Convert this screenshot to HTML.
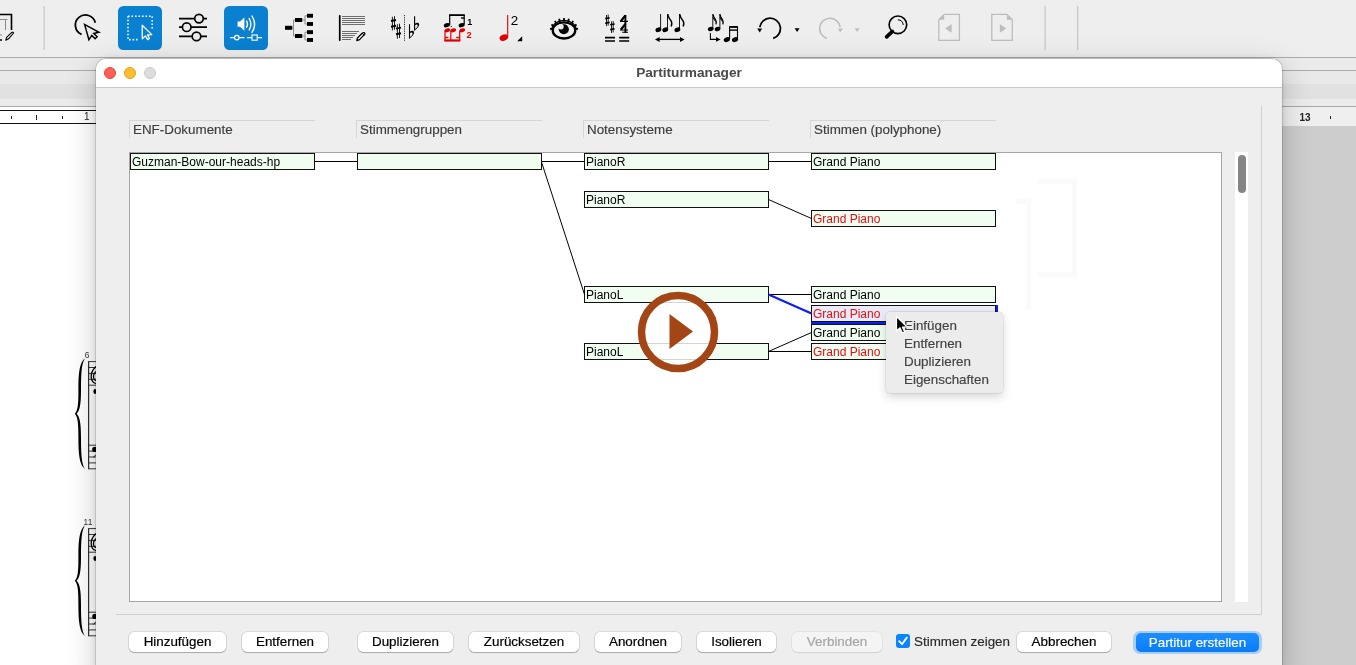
<!DOCTYPE html>
<html><head><meta charset="utf-8">
<style>
*{box-sizing:border-box;margin:0;padding:0}
html,body{-webkit-font-smoothing:antialiased;width:1356px;height:665px;overflow:hidden;background:#ececec;font-family:"Liberation Sans",sans-serif;position:relative}
.a{position:absolute}
#tb{left:0;top:0;width:1356px;height:58px;background:#eeeeee;border-bottom:1px solid #ababab}
#band{left:0;top:58px;width:1356px;height:49px;background:#ebebeb}
#score{left:0;top:124px;width:96px;height:541px;background:#fff}
#grayR{left:1282px;top:126px;width:74px;height:539px;background:#cdcdcd}
#dlg{left:96px;top:59px;width:1186px;height:620px;background:#eeeeee;border-radius:10px 10px 0 0;overflow:hidden;box-shadow:0 0 0 0.5px rgba(0,0,0,0.25),0 0 7px rgba(0,0,0,0.1),0 8px 30px rgba(0,0,0,0.22)}
#title{left:0;top:0;width:1186px;height:29px;background:#fff;border-bottom:1px solid #c8c8c8}
.dot{width:12px;height:12px;border-radius:50%;top:8px}
.hdr{top:61px;height:18px;border-top:1px solid #d6d6d6;border-left:1px solid #d6d6d6;font-size:13.4px;color:#3d3d3d;-webkit-text-stroke:0.15px #3d3d3d;padding-left:3px;line-height:18px}
#panel{left:33px;top:93px;width:1093px;height:450px;background:#fff;border:1px solid #a6a6a6}
.bx{position:absolute;height:17px;width:185px;border:1px solid #111;background:#f1fdf1;font-size:12px;line-height:15px;padding:1px 0 0 1px;color:#000;white-space:nowrap;overflow:hidden}
.red{color:#e01010}
.btn.dis{background:#f4f4f4;color:#a6a6a6;-webkit-text-stroke:0.2px #a6a6a6;box-shadow:0 0 0 0.5px rgba(0,0,0,0.08),0 1px 1px rgba(0,0,0,0.08)}
.sel{background:#eaeaf8}
.btn{position:absolute;top:632px;height:20px;background:#fff;border-radius:5px;box-shadow:0 0 0 0.5px rgba(0,0,0,0.18),0 1px 1px rgba(0,0,0,0.22);font-size:13.4px;line-height:20px;text-align:center;color:#000;-webkit-text-stroke:0.2px #000}
#root{position:absolute;left:0;top:0;width:1356px;height:665px;overflow:hidden;will-change:transform}
</style></head><body><div id="root">
<div id="tb" class="a"></div>
<!--TB--><svg class="a" style="left:0;top:0" width="1356" height="57" viewBox="0 0 1356 57">
<!-- partial icon -->
<path d="M0 14.5 H11.5 V30" stroke="#000" stroke-width="1.6" fill="none"/>
<path d="M0 19.5 H7.5 M5.5 19 V30 M0 35 H2" stroke="#8a8a8a" stroke-width="1" fill="none"/>
<path d="M0 40 H2" stroke="#000" stroke-width="1.6"/>
<path d="M5.8 40.2 L6.6 37.4 L11.8 32.4 Q13.2 31.6 13.6 33 L8.6 38.8 Z" stroke="#000" stroke-width="1.1" fill="none" stroke-linejoin="round"/>
<!-- separators -->
<rect x="43.5" y="6" width="1.2" height="44" fill="#c6c6c6"/>
<rect x="1044.5" y="6" width="1.2" height="44" fill="#c6c6c6"/>
<rect x="1077" y="6" width="1.2" height="44" fill="#c6c6c6"/>
<!-- lasso -->
<path d="M81.6 34.4 A10.1 10.1 0 1 1 95.3 22.8" stroke="#000" stroke-width="1.8" fill="none"/>
<path d="M84.6 24.4 L88.9 39.8 L91.8 35.4 L95.1 38.8 L97.1 36.8 L93.8 33.5 L98.9 32.3 Z" stroke="#000" stroke-width="1.5" fill="#ececec" stroke-linejoin="miter"/>
<!-- blue selection btn -->
<rect x="118" y="6" width="44" height="44" rx="5.5" fill="#0a80d0"/>
<path d="M128 16.2 H152.2 V28.5 M128 16.2 V39.6 H137.5" stroke="#fff" stroke-width="1.6" stroke-dasharray="1.6 1.9" fill="none"/>
<path d="M142.2 25.3 L142.3 38.9 L145.4 35.9 L147.6 39.6 L149.5 38.5 L147.5 35 L151.8 34.6 Z" stroke="#fff" stroke-width="1.3" fill="#0a80d0" stroke-linejoin="round"/>
<!-- sliders -->
<path d="M179 18.6 H207 M179 27.2 H207 M179 36.4 H207" stroke="#000" stroke-width="1.7"/>
<circle cx="199" cy="18.6" r="4.3" stroke="#000" stroke-width="1.7" fill="#ececec"/>
<circle cx="186.7" cy="27.2" r="4.3" stroke="#000" stroke-width="1.7" fill="#ececec"/>
<circle cx="196.5" cy="36.4" r="4.3" stroke="#000" stroke-width="1.7" fill="#ececec"/>
<!-- blue sound btn -->
<rect x="224" y="6" width="44" height="44" rx="5.5" fill="#0a80d0"/>
<path d="M237.6 21.6 H240 L244.4 17.6 V30.8 L240 26.8 H237.6 Z" fill="#fff"/>
<path d="M246.6 21.2 Q248.4 24.2 246.6 27.2 M249.2 18.6 Q252.6 24.2 249.2 29.8 M252 16 Q257.2 24.2 252 32.4" stroke="#fff" stroke-width="1.4" fill="none" stroke-linecap="round"/>
<path d="M230 37.6 H234.5 M239.2 37.6 H244.5 M247 37.6 H252 M257.3 37.6 H262" stroke="#fff" stroke-width="1.2"/>
<circle cx="236.8" cy="37.6" r="2.3" stroke="#fff" stroke-width="1.2" fill="none"/>
<rect x="252" y="35" width="5.2" height="5.2" stroke="#fff" stroke-width="1.1" fill="none"/>
<!-- tree -->
<path d="M292 27.8 H293.5 M293.5 20 V36 H295 M293.5 20 H295 M302 20 H305 M302 36 H305 M305 15.8 V24 M305 32.2 V40 M305 15.8 H307 M305 24 H307 M305 32.2 H307 M305 40 H307" stroke="#8c8c8c" stroke-width="1" fill="none"/>
<g fill="#000">
<rect x="285" y="25.8" width="7.2" height="4"/>
<rect x="295" y="18" width="7.2" height="4"/>
<rect x="295" y="34" width="7.2" height="4"/>
<rect x="307" y="13.8" width="6" height="3.9"/>
<rect x="307" y="22" width="6" height="3.9"/>
<rect x="307" y="30.2" width="6" height="3.9"/>
<rect x="307" y="38" width="6" height="3.9"/>
</g>
<!-- staff pencil -->
<rect x="338.9" y="15" width="1.7" height="26" rx="0.8" fill="#000"/>
<g fill="#6e6e6e">
<rect x="342" y="16" width="23" height="1"/><rect x="342" y="18" width="23" height="1"/><rect x="342" y="20" width="23" height="1"/><rect x="342" y="22" width="23" height="1"/><rect x="342" y="24" width="23" height="1"/>
<rect x="342" y="31" width="17" height="1"/><rect x="342" y="33" width="15" height="1"/><rect x="342" y="35" width="13" height="1"/><rect x="342" y="37" width="11" height="1"/><rect x="342" y="39" width="9" height="1"/>
</g>
<path d="M356.8 40.6 L357.4 38 L362.4 33 Q364.4 31.8 365 33.8 L359.6 39.6 Z" stroke="#000" stroke-width="1.2" fill="none" stroke-linejoin="round"/>
<path d="M362.2 33.4 L364.4 35.4" stroke="#000" stroke-width="1"/>
<!-- sharps flats -->
<g stroke="#000" fill="none">
<path d="M392.4 16.8 V30.5 M394.5 16.2 V29.6" stroke-width="0.9"/>
<path d="M391 21 L396 20 M391 26.7 L396 25.7" stroke-width="1.9"/>
<path d="M397.4 24.2 V38.7 M399.5 23.6 V38" stroke-width="0.9"/>
<path d="M396 28.6 L401 27.6 M396 34.3 L401 33.3" stroke-width="1.9"/>
<path d="M404.5 15 V41" stroke="#333" stroke-width="1" stroke-dasharray="1 0.8"/>
<path d="M409.5 24.2 V38.6" stroke-width="1.1"/><path d="M409.3 38.6 C412.3 36.6 414.3 34.1 414.1 32.300000000000004 C413.90000000000003 30.200000000000003 411.7 30.200000000000003 409.3 32.0 L409.3 33.4 C411.3 32.2 412.7 32.4 412.6 33.4 C412.40000000000003 35.0 410.90000000000003 36.6 409.3 37.2 Z" fill="#000" stroke="none"/>
<path d="M414.6 16.2 V30.6" stroke-width="1.1"/><path d="M414.4 30.6 C417.4 28.6 419.4 26.1 419.2 24.3 C419.0 22.200000000000003 416.79999999999995 22.200000000000003 414.4 24.0 L414.4 25.400000000000002 C416.4 24.200000000000003 417.79999999999995 24.400000000000002 417.7 25.400000000000002 C417.5 27.0 416.0 28.6 414.4 29.200000000000003 Z" fill="#000" stroke="none"/>
</g>
<!-- notes red/black -->
<g>
<rect x="449" y="14.2" width="15.8" height="1.8" fill="#000"/>
<path d="M449.7 15 V25 M464.2 15 V24.6" stroke="#000" stroke-width="1.2"/>
<rect x="461" y="17.3" width="3.4" height="1.4" fill="#000"/>
<ellipse cx="446.8" cy="25.2" rx="3.1" ry="2" transform="rotate(-20 446.8 25.2)" fill="#000"/>
<ellipse cx="461.6" cy="25.2" rx="3.1" ry="2" transform="rotate(-20 461.6 25.2)" fill="#000"/>
<circle cx="451.3" cy="26.4" r="0.6" fill="#000"/>
<text x="467.2" y="24.7" font-family="Liberation Sans" font-weight="bold" font-size="9" fill="#000">1</text>
<ellipse cx="447.4" cy="30.3" rx="2.9" ry="1.9" transform="rotate(-20 447.4 30.3)" fill="#e00000"/>
<ellipse cx="453.3" cy="30.3" rx="2.9" ry="1.9" transform="rotate(-20 453.3 30.3)" fill="#e00000"/>
<ellipse cx="462.3" cy="30.3" rx="2.9" ry="1.9" transform="rotate(-20 462.3 30.3)" fill="#e00000"/>
<path d="M445 30.6 V41 M450.8 30.6 V41 M459.7 30.6 V41" stroke="#e00000" stroke-width="1.2"/>
<rect x="444.4" y="39.4" width="15.9" height="2.2" fill="#e00000"/>
<rect x="445" y="36.8" width="3.4" height="1.4" fill="#e00000"/>
<rect x="456.3" y="36.8" width="3.4" height="1.4" fill="#e00000"/>
<text x="466.6" y="37.9" font-family="Liberation Sans" font-weight="bold" font-size="9.2" fill="#e00000">2</text>
</g>
<!-- red quarter -->
<path d="M507.7 15 V37.5" stroke="#e00000" stroke-width="1.1"/>
<ellipse cx="503.8" cy="37.6" rx="4.4" ry="3" transform="rotate(-22 503.8 37.6)" fill="#e00000"/>
<text x="510.8" y="25" font-family="Liberation Sans" font-size="13.4" fill="#000">2</text>
<path d="M517.2 41.2 L522.2 41.2 L522.2 36.2 Z" fill="#000"/>
<!-- eye hover bg -->
<rect x="539.4" y="3.6" width="54.6" height="49" fill="#eeeeee"/>
<ellipse cx="564" cy="30.4" rx="11.25" ry="8.1" stroke="#000" stroke-width="2.3" fill="#eeeeee"/>
<path d="M551.8 29.799999999999997 A12.2 9.4 0 0 1 576.2 29.799999999999997" stroke="#000" stroke-width="1.2" fill="none"/>
<path d="M552.31 29.16 L549.94 28.67 M553.58 26.22 L551.46 24.58 M556.42 23.58 L554.87 20.90 M559.96 22.04 L559.14 18.75 M564.00 21.50 L564.00 18.00 M568.04 22.04 L568.86 18.75 M571.58 23.58 L573.13 20.90 M574.42 26.22 L576.54 24.58 M575.69 29.16 L578.06 28.67 " stroke="#000" stroke-width="1.8"/>
<circle cx="563.8" cy="29.3" r="5.05" fill="#000"/>
<circle cx="560.9" cy="26.7" r="2.75" fill="#eeeeee"/>
<!-- key time sig -->
<g stroke="#000" fill="none">
<path d="M606.5 15 V26.2 M608.2 14.6 V25.6" stroke-width="0.85"/>
<path d="M605.2 18.6 L609.6 17.8 M605.2 23.2 L609.6 22.4" stroke-width="1.6"/>
<path d="M611.5 21.4 V33 M613.2 21 V32.4" stroke-width="0.85"/>
<path d="M610.2 24.8 L614.6 24 M610.2 29.6 L614.6 28.8" stroke-width="1.6"/>
<path d="M605 37.6 H615 M605 41 H615 M619.2 37.6 H629.2 M619.2 41 H629.2" stroke-width="1.6"/>
<path d="M620.8 21.2 L625.4 15.4 M620.8 29.8 L625.4 24" stroke-width="2.2"/>
<path d="M625.4 15 V32.8" stroke-width="1.9"/>
<path d="M620 21.4 H628 M620 30 H628 M622.2 32.2 H628" stroke-width="1.1"/>
</g>
<!-- notes arrow -->
<g fill="#000">
<ellipse cx="658.4" cy="29.8" rx="3" ry="2.2" transform="rotate(-22 658.4 29.8)"/>
<ellipse cx="665.3" cy="29.8" rx="3" ry="2.2" transform="rotate(-22 665.3 29.8)"/>
<ellipse cx="677.4" cy="29.8" rx="3" ry="2.2" transform="rotate(-22 677.4 29.8)"/>
<path d="M655 39.4 L659.6 36.9 V41.9 Z M684.6 39.4 L680 36.9 V41.9 Z"/>
</g>
<g stroke="#000" fill="none">
<path d="M660.6 14 V29.4 M667.5 14 V29.4 M679.5 14 V29.4" stroke-width="0.9"/>
<path d="M667.7 14.2 Q668.4 18 670.8 20.4 Q672.6 22.8 671.2 26.6 M679.7 14.2 Q680.4 18 682.8 20.4 Q684.6 22.8 683.2 26.6" stroke-width="1.4"/>
<path d="M658 39.4 H681.6" stroke-width="1.3"/>
</g>
<!-- notes moving -->
<g fill="#000">
<ellipse cx="710.7" cy="29" rx="2.9" ry="2.1" transform="rotate(-22 710.7 29)"/>
<ellipse cx="717.5" cy="29" rx="2.9" ry="2.1" transform="rotate(-22 717.5 29)"/>
<ellipse cx="726.8" cy="39.6" rx="3.2" ry="2.3" transform="rotate(-22 726.8 39.6)"/>
<ellipse cx="735" cy="39.6" rx="3.2" ry="2.3" transform="rotate(-22 735 39.6)"/>
<path d="M720.6 39.4 L716 37 V41.8 Z"/>
<rect x="729.2" y="26" width="8.8" height="1.9"/>
<rect x="729.2" y="29.4" width="8.8" height="1.4"/>
</g>
<g stroke="#000" fill="none">
<path d="M712.8 14 V28.6 M719.9 14 V28.6" stroke-width="0.9"/>
<path d="M713 14.4 Q713.8 18 715.6 19.8 Q716.6 21.6 716 24.4 M719.9 14.4 Q720.7 18 722.5 19.8 Q723.5 21.6 722.9 24.4" stroke-width="1.3"/>
<path d="M713 17.6 L715.6 21.6 M719.9 17.6 L722.5 21.6" stroke-width="1"/>
<path d="M710.4 33 V39.4 H716.6" stroke-width="1.1"/>
<path d="M729.6 39 V26.4 M737.5 39 V26.4" stroke-width="1.1"/>
</g>
<!-- undo -->
<path d="M759.8 27.2 A10.35 10.35 0 1 1 773.2 38.4" stroke="#000" stroke-width="1.75" fill="none"/>
<path d="M757.2 28.4 H762.2 L759.7 32.4 Z" fill="#000"/>
<path d="M794.6 28.2 H799.6 L797.1 32 Z" fill="#000"/>
<!-- redo gray -->
<path d="M826.8 38.4 A10.35 10.35 0 1 1 840.2 27.2" stroke="#bdbdbd" stroke-width="1.6" fill="none"/>
<path d="M837.8 28.4 H842.8 L840.3 32.4 Z" fill="#bdbdbd"/>
<path d="M854.6 28.2 H859.6 L857.1 32 Z" fill="#bdbdbd"/>
<!-- magnifier -->
<circle cx="897.9" cy="24.8" r="8.8" stroke="#000" stroke-width="1.65" fill="none"/>
<path d="M897.8 19.8 A5.6 5.6 0 0 1 903.2 25" stroke="#000" stroke-width="1" fill="none"/>
<path d="M892.4 31.4 L886.6 36.8" stroke="#000" stroke-width="3.7" stroke-linecap="round"/>
<!-- prev/next page -->
<path d="M938.8 40.3 V19.8 L944.2 14.4 H959.4 V40.3 Z" stroke="#bdbdbd" stroke-width="1.3" fill="none"/>
<path d="M938.8 19.8 L944.2 14.4 V19.8 Z" fill="#bdbdbd"/>
<path d="M945.2 28.4 L951.6 24 V32.8 Z" fill="#bdbdbd"/>
<path d="M991.8 40.3 V14.4 H1006.9 L1012.3 19.8 V40.3 Z" stroke="#bdbdbd" stroke-width="1.3" fill="none"/>
<path d="M1006.9 14.4 L1012.3 19.8 H1006.9 Z" fill="#bdbdbd"/>
<path d="M1006.2 28.4 L999.8 24 V32.8 Z" fill="#bdbdbd"/>
</svg>
<!--/TB-->
<div id="band" class="a"></div>
<div class="a" style="left:0;top:70px;width:1356px;height:1px;background:#ababab"></div>
<div class="a" style="left:0;top:71px;width:1356px;height:13px;background:#e9e9e9"></div>
<div class="a" style="left:0;top:84px;width:1356px;height:15px;background:#e1e1e1"></div>
<div class="a" style="left:0;top:99px;width:1356px;height:7px;background:#ebebeb"></div>
<div class="a" style="left:0;top:106px;width:1356px;height:1px;background:#a9a9a9"></div>
<div class="a" style="left:0;top:107px;width:1356px;height:19px;background:#efefef"></div>
<div class="a" style="left:0;top:107px;width:96px;height:17px;background:#fff"></div>
<div class="a" style="left:0;top:110px;width:96px;height:1px;background:#111"></div>
<div class="a" style="left:0;top:123px;width:96px;height:1px;background:#111"></div>
<div class="a" style="left:11px;top:116px;width:1px;height:3px;background:#222"></div>
<div class="a" style="left:36px;top:115px;width:1px;height:5px;background:#222"></div>
<div class="a" style="left:62px;top:116px;width:1px;height:3px;background:#222"></div>
<div class="a" style="left:84px;top:111px;font-size:10px;color:#222;line-height:12px">1</div>
<div class="a" style="left:1299.5px;top:112px;font-size:10px;font-weight:bold;color:#222;line-height:12px">13</div>
<div class="a" style="left:1330px;top:116px;width:1px;height:3px;background:#222"></div>
<div id="score" class="a"></div>
<div id="grayR" class="a"></div>
<svg class="a" style="left:0;top:0" width="96" height="665"><g transform="translate(0 0)"><path d="M85 358.3 C79.6 362.5 78.4 372 78.4 390 C78.5 405 77.6 411 74.8 413.7 C77.6 416.4 78.5 422.4 78.4 437.4 C78.4 455.4 79.6 464.9 85 469.1 C81.8 464.4 81 455.4 81 437.4 C81 422.4 79.6 416.4 76.6 413.7 C79.6 411 81 405 81 390 C81 372 81.8 363 85 358.3 Z" fill="#000"/><path d="M88.7 361.2 V469.2" stroke="#000" stroke-width="1"/><path d="M88.5 361.6 H96" stroke="#222" stroke-width="0.9"/><path d="M88.5 367.5 H96" stroke="#222" stroke-width="0.9"/><path d="M88.5 373.4 H96" stroke="#222" stroke-width="0.9"/><path d="M88.5 379.3 H96" stroke="#222" stroke-width="0.9"/><path d="M88.5 385.2 H96" stroke="#222" stroke-width="0.9"/><path d="M88.5 445.2 H96" stroke="#222" stroke-width="0.9"/><path d="M88.5 451.1 H96" stroke="#222" stroke-width="0.9"/><path d="M88.5 457 H96" stroke="#222" stroke-width="0.9"/><path d="M88.5 462.9 H96" stroke="#222" stroke-width="0.9"/><path d="M88.5 468.8 H96" stroke="#222" stroke-width="0.9"/><path d="M96 366.5 Q91 371 91.2 377 Q91.6 382.6 96 383.6 M96 371.5 Q93.2 374 93.5 377.5 Q93.8 380 96 380.6" stroke="#000" stroke-width="1.3" fill="none"/><ellipse cx="95" cy="391.5" rx="1.6" ry="2.4" fill="#000"/><circle cx="94.8" cy="449.4" r="2.6" fill="#000"/><path d="M93.5 457.5 L96 454.5" stroke="#000" stroke-width="0.9"/><text x="84.8" y="357.8" font-family="Liberation Sans" font-size="8.4" fill="#333">6</text></g><g transform="translate(0 167)"><path d="M85 358.3 C79.6 362.5 78.4 372 78.4 390 C78.5 405 77.6 411 74.8 413.7 C77.6 416.4 78.5 422.4 78.4 437.4 C78.4 455.4 79.6 464.9 85 469.1 C81.8 464.4 81 455.4 81 437.4 C81 422.4 79.6 416.4 76.6 413.7 C79.6 411 81 405 81 390 C81 372 81.8 363 85 358.3 Z" fill="#000"/><path d="M88.7 361.2 V469.2" stroke="#000" stroke-width="1"/><path d="M88.5 361.6 H96" stroke="#222" stroke-width="0.9"/><path d="M88.5 367.5 H96" stroke="#222" stroke-width="0.9"/><path d="M88.5 373.4 H96" stroke="#222" stroke-width="0.9"/><path d="M88.5 379.3 H96" stroke="#222" stroke-width="0.9"/><path d="M88.5 385.2 H96" stroke="#222" stroke-width="0.9"/><path d="M88.5 445.2 H96" stroke="#222" stroke-width="0.9"/><path d="M88.5 451.1 H96" stroke="#222" stroke-width="0.9"/><path d="M88.5 457 H96" stroke="#222" stroke-width="0.9"/><path d="M88.5 462.9 H96" stroke="#222" stroke-width="0.9"/><path d="M88.5 468.8 H96" stroke="#222" stroke-width="0.9"/><path d="M96 366.5 Q91 371 91.2 377 Q91.6 382.6 96 383.6 M96 371.5 Q93.2 374 93.5 377.5 Q93.8 380 96 380.6" stroke="#000" stroke-width="1.3" fill="none"/><ellipse cx="95" cy="391.5" rx="1.6" ry="2.4" fill="#000"/><circle cx="94.8" cy="449.4" r="2.6" fill="#000"/><path d="M93.5 457.5 L96 454.5" stroke="#000" stroke-width="0.9"/><text x="83.6" y="357.8" font-family="Liberation Sans" font-size="8.4" fill="#333">11</text></g></svg>

<div id="dlg" class="a">
  <div id="title" class="a">
    <div class="a dot" style="left:8px;background:#fe5f57;border:0.5px solid #e14640"></div>
    <div class="a dot" style="left:28px;background:#febc2e;border:0.5px solid #dfa023"></div>
    <div class="a dot" style="left:48px;background:#dddddd;border:0.5px solid #c9c9c9"></div>
    <div class="a" style="left:0;width:1186px;top:6px;text-align:center;font-weight:bold;font-size:13.7px;color:#4a4a4a;line-height:16px">Partiturmanager</div>
  </div>
  <div class="a hdr" style="left:33px;width:186px">ENF-Dokumente</div>
  <div class="a hdr" style="left:260px;width:186px">Stimmengruppen</div>
  <div class="a hdr" style="left:487px;width:186px">Notensysteme</div>
  <div class="a hdr" style="left:714px;width:186px">Stimmen (polyphone)</div>
  <div id="panel" class="a"></div>
</div>
<div class="bx " style="left:130px;top:153px">Guzman-Bow-our-heads-hp</div>
<div class="bx " style="left:357px;top:153px"></div>
<div class="bx " style="left:584px;top:153px">PianoR</div>
<div class="bx " style="left:584px;top:191px">PianoR</div>
<div class="bx " style="left:584px;top:286px">PianoL</div>
<div class="bx " style="left:584px;top:343px">PianoL</div>
<div class="bx " style="left:811px;top:153px">Grand Piano</div>
<div class="bx red" style="left:811px;top:210px">Grand Piano</div>
<div class="bx " style="left:811px;top:286px">Grand Piano</div>
<div class="bx red sel" style="left:811px;top:305px">Grand Piano</div>
<div class="bx " style="left:811px;top:324px">Grand Piano</div>
<div class="bx red" style="left:811px;top:343px">Grand Piano</div>
<svg class="a" style="left:0;top:0" width="1356" height="665">
<g stroke="#000" stroke-width="1" fill="none" shape-rendering="auto">
<line x1="315" y1="161.5" x2="357" y2="161.5"/>
<line x1="542" y1="161.5" x2="584" y2="161.5"/>
<line x1="541.5" y1="162" x2="584.5" y2="294.5"/>
<line x1="769" y1="161.5" x2="811" y2="161.5"/>
<line x1="768.5" y1="199.5" x2="811.5" y2="218.5"/>
<line x1="769" y1="294.5" x2="811" y2="294.5"/>
<line x1="768.5" y1="351.5" x2="811.5" y2="332.5"/>
<line x1="769" y1="351.5" x2="811" y2="351.5"/>
</g>
<line x1="768.5" y1="294.5" x2="811.5" y2="313.5" stroke="#0a1ff0" stroke-width="2.2"/>
<rect x="811" y="322" width="187" height="2" fill="#0a1ff0"/>
<rect x="996" y="305" width="2" height="19" fill="#0a1ff0"/>
</svg>
<div class="btn" style="left:129px;width:97px">Hinzufügen</div>
<div class="btn" style="left:242px;width:86px">Entfernen</div>
<div class="btn" style="left:358px;width:95px">Duplizieren</div>
<div class="btn" style="left:469px;width:110px">Zurücksetzen</div>
<div class="btn" style="left:595px;width:86px">Anordnen</div>
<div class="btn" style="left:697px;width:79px">Isolieren</div>
<div class="btn" style="left:1017px;width:94px">Abbrechen</div>
<div class="btn dis" style="left:792px;width:90px">Verbinden</div>
<div class="a" style="left:896px;top:634px;width:14px;height:14px;border-radius:3px;background:#0a84ff"><svg width="14" height="14" style="position:absolute;left:0;top:0"><path d="M3.2 7.2 L6 10.2 L10.8 3.6" stroke="#fff" stroke-width="1.8" fill="none" stroke-linecap="round" stroke-linejoin="round"/></svg></div>
<div class="a" style="left:914px;top:632px;font-size:13.4px;line-height:20px;color:#2a2a2a;-webkit-text-stroke:0.15px #2a2a2a">Stimmen zeigen</div>
<div class="a" style="left:1133px;top:631px;width:129px;height:23px;border-radius:7px;background:#a9cdf7"></div>
<div class="a" style="left:1136px;top:633px;width:123px;height:19px;border-radius:5px;background:linear-gradient(#1c8fff,#0a7cf5);color:#fff;font-size:13.4px;line-height:19px;text-align:center;-webkit-text-stroke:0.15px #fff">Partitur erstellen</div>
<div class="a" style="left:116px;top:614px;width:1146px;height:1px;background:#cfcfcf"></div>
<div class="a" style="left:1261px;top:106px;width:1px;height:509px;background:#cfcfcf"></div>
<div class="a" style="left:1235px;top:152px;width:13px;height:450px;background:#fff"></div>
<div class="a" style="left:1238px;top:155px;width:8px;height:38px;border-radius:4px;background:#858585"></div>
<svg class="a" style="left:1000px;top:170px" width="90" height="140"><path d="M37.5 11.5 H74.5 V104.5 H37.5 M16 31.5 H29 V140" stroke="#fafafa" stroke-width="4.5" fill="none"/></svg>
<div class="a" style="left:886px;top:312px;width:117px;height:81px;background:#ececec;border-radius:4px;box-shadow:0 0 0 0.5px rgba(0,0,0,0.12),0 4px 10px rgba(0,0,0,0.16)"></div>
<div class="a" style="left:904px;top:317px;font-size:13.4px;line-height:18px;color:#424242;-webkit-text-stroke:0.15px #424242">Einfügen<br>Entfernen<br>Duplizieren<br>Eigenschaften</div>
<svg class="a" style="left:892px;top:314px" width="20" height="24" viewBox="0 0 20 24"><path d="M4.5 2.5 L4.5 17 L8 13.8 L10.3 19 L12.6 18 L10.4 13 L15 12.8 Z" fill="#000" stroke="#fff" stroke-width="1.2" stroke-linejoin="round"/></svg>
<svg class="a" style="left:636px;top:290px" width="84" height="84" viewBox="0 0 84 84"><circle cx="42" cy="42" r="36.5" fill="rgba(255,255,255,0.82)" stroke="#a44515" stroke-width="7.5"/><path d="M33.5 24 L57 41.5 L33.5 59 Z" fill="#a44515"/></svg>
</div></body></html>
